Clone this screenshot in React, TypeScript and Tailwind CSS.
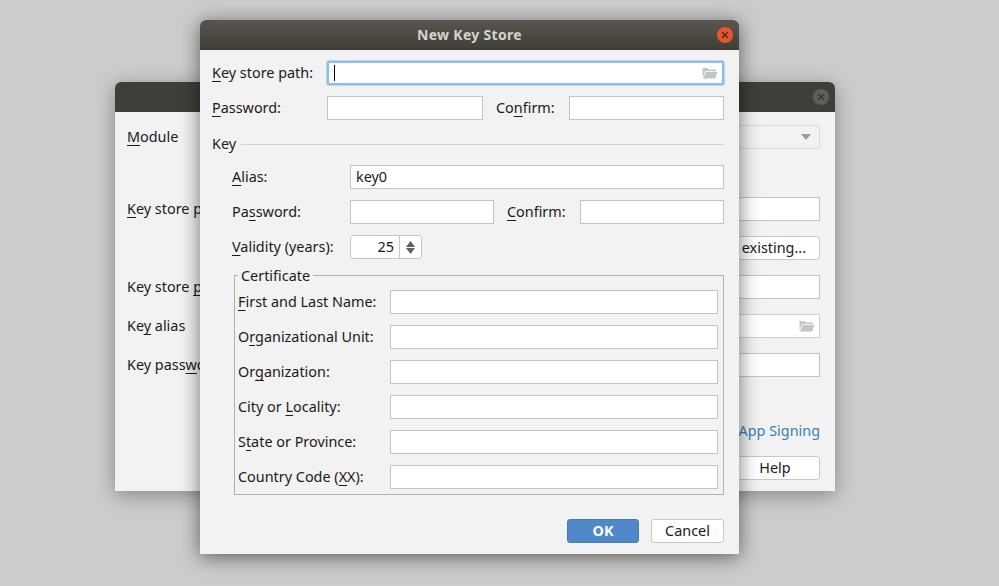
import React from "react";

const font = "font-['Noto_Sans','Liberation_Sans',sans-serif]";

function M({ b = "", m, a = "" }: { b?: string; m: string; a?: string }) {
  return (
    <span className="whitespace-nowrap">
      {b}
      <span className="underline decoration-1 underline-offset-[3px]">{m}</span>
      {a}
    </span>
  );
}

function Field({ className = "", children }: { className?: string; children?: React.ReactNode }) {
  return (
    <div className={`h-6 bg-white border border-[#c4c4c4] flex items-center justify-end ${className}`}>{children}</div>
  );
}

function Folder({ className = "" }: { className?: string }) {
  return (
    <svg width="16" height="12" viewBox="0 0 16 12" className={className}>
      <path d="M0.5 1 H5.5 L7 2.5 H14 V4 H3.5 L0.5 10 Z" fill="#c2c6c8" />
      <path d="M4 4.8 H15.5 L13.2 11.5 H0.8 Z" fill="#c2c6c8" />
    </svg>
  );
}

function Close({ active }: { active?: boolean }) {
  return (
    <div
      className={`w-4 h-4 rounded-full flex items-center justify-center ${
        active ? "bg-[#e5562a]" : "bg-[#5f5e59]"
      }`}
    >
      <svg width="8" height="8" viewBox="0 0 8 8">
        <path d="M1 1 L7 7 M7 1 L1 7" stroke={active ? "#47220f" : "#343330"} strokeWidth="1.2" />
      </svg>
    </div>
  );
}

function Btn({ children, className = "" }: { children: React.ReactNode; className?: string }) {
  return (
    <div className={`h-6 bg-white border border-[#c8c8c8] rounded-[3px] flex items-center justify-center ${className}`}>
      {children}
    </div>
  );
}

function BackWindow() {
  return (
    <div className="absolute left-[115px] top-[82px] w-[720px] h-[409px] bg-[#f2f2f2] rounded-t-[6px] shadow-[0_4px_20px_rgba(0,0,0,0.35)] flex flex-col">
      <div className="h-[30px] shrink-0 rounded-t-[6px] bg-[#403e39] flex items-center justify-end pr-[6px]">
        <Close />
      </div>
      <div className="flex flex-col px-[12px] pr-[15px] pt-[13px]">
        <div className="h-6 flex items-center justify-between">
          <M m="M" a="odule" />
          <div className="w-[200px] h-6 border border-[#d8d8d8] rounded-[3px] flex items-center justify-end pr-[8px]">
            <svg width="10" height="6" viewBox="0 0 10 6">
              <path d="M0 0 H10 L5 6 Z" fill="#9b9b9b" />
            </svg>
          </div>
        </div>
        <div className="h-6 mt-[48px] flex items-center justify-between">
          <M m="K" a="ey store path:" />
          <Field className="w-[500px]" />
        </div>
        <div className="h-6 mt-[15px] flex justify-end">
          <Btn className="w-[200px] justify-end pr-[13px]">Choose existing...</Btn>
        </div>
        <div className="h-6 mt-[15px] flex items-center justify-between">
          <M b="Key store " m="p" a="assword" />
          <Field className="w-[500px]" />
        </div>
        <div className="h-6 mt-[15px] flex items-center justify-between">
          <M b="Ke" m="y" a=" alias" />
          <Field className="w-[500px] bg-[#f2f2f2] border-[#d0d0d0] pr-[4px]">
            <Folder />
          </Field>
        </div>
        <div className="h-6 mt-[15px] flex items-center justify-between">
          <M b="Key pass" m="w" a="ord" />
          <Field className="w-[500px]" />
        </div>
        <div className="h-6 mt-[42px] flex items-center justify-end text-[#3b7fb8]">
          <span>Google Play App Signing</span>
        </div>
        <div className="h-6 mt-[13px] flex justify-end">
          <Btn className="w-[90px]">Help</Btn>
        </div>
      </div>
    </div>
  );
}

function CertRow({ label, top }: { label: React.ReactNode; top?: boolean }) {
  return (
    <div className={`flex items-center justify-between h-6 ${top ? "" : "mt-[11px]"}`}>
      {label}
      <Field className="w-[328px]" />
    </div>
  );
}

function FrontWindow() {
  return (
    <div className="absolute left-[200px] top-[20px] w-[539px] h-[534px] bg-[#f2f2f2] rounded-t-[6px] shadow-[0_3px_20px_rgba(0,0,0,0.55)] flex flex-col">
      <div className="relative h-[30px] shrink-0 rounded-t-[6px] bg-gradient-to-b from-[#5a564e] to-[#403e39] flex items-center justify-center">
        <span className="font-bold text-[#d6d3cc] text-[14px] tracking-[0.3px]">New Key Store</span>
        <div className="absolute right-[6px] top-[7px]">
          <Close active />
        </div>
      </div>
      <div className="flex flex-col pl-[12px] pr-[15px] pt-[11px]">
        <div className="flex items-center justify-between h-6">
          <M m="K" a="ey store path:" />
          <div className="w-[397px] h-6 bg-white border-[2px] border-[#8fbbea] shadow-[0_0_0_1px_#b9d4f0] rounded-[2px] flex items-center justify-between pl-[5px] pr-[4px]">
            <div className="w-px h-[16px] bg-black" />
            <Folder />
          </div>
        </div>
        <div className="flex items-center h-6 mt-[11px]">
          <div className="w-[115px]">
            <M m="P" a="assword:" />
          </div>
          <Field className="w-[156px]" />
          <div className="ml-[13px] w-[73px]">
            <M b="Co" m="n" a="firm:" />
          </div>
          <Field className="w-[155px]" />
        </div>
        <div className="flex items-center h-5 mt-[14px]">
          <span>Key</span>
          <div className="flex-1 h-px bg-[#cfcfcf] ml-[5px]" />
        </div>
        <div className="flex flex-col pl-[20px] mt-[11px]">
          <div className="flex items-center h-6">
            <div className="w-[118px]">
              <M m="A" a="lias:" />
            </div>
            <Field className="flex-1 justify-start pl-[5px]">key0</Field>
          </div>
          <div className="flex items-center h-6 mt-[11px]">
            <div className="w-[118px]">
              <M b="Pa" m="s" a="sword:" />
            </div>
            <Field className="w-[144px]" />
            <div className="ml-[13px] w-[73px]">
              <M m="C" a="onfirm:" />
            </div>
            <Field className="w-[144px]" />
          </div>
          <div className="flex items-center h-6 mt-[11px]">
            <div className="w-[118px]">
              <M m="V" a="alidity (years):" />
            </div>
            <div className="w-[72px] h-6 bg-white border border-[#c8c8c8] rounded-[3px] flex">
              <div className="flex-1 flex items-center justify-end pr-[5px]">25</div>
              <div className="w-[22px] border-l border-[#c8c8c8] flex flex-col items-center justify-center gap-px">
                <svg width="9" height="6" viewBox="0 0 9 6">
                  <path d="M4.5 0 L9 6 H0 Z" fill="#606060" />
                </svg>
                <svg width="9" height="6" viewBox="0 0 9 6">
                  <path d="M0 0 H9 L4.5 6 Z" fill="#606060" />
                </svg>
              </div>
            </div>
          </div>
          <div className="relative mt-[16px] ml-[2px] h-[220px] border border-[#b0b0b0] px-[3px] pt-[14px] pr-[5px]">
            <div className="absolute left-[3px] top-[-10px] h-5 px-[3px] bg-[#f2f2f2] flex items-center">Certificate</div>
            <CertRow top label={<M m="F" a="irst and Last Name:" />} />
            <CertRow label={<M b="O" m="r" a="ganizational Unit:" />} />
            <CertRow label={<M b="Or" m="g" a="anization:" />} />
            <CertRow label={<M b="City or " m="L" a="ocality:" />} />
            <CertRow label={<M b="S" m="t" a="ate or Province:" />} />
            <CertRow label={<M b="Country Code (" m="X" a="X):" />} />
          </div>
        </div>
        <div className="flex justify-end gap-[12px] mt-[24px]">
          <div className="w-[72px] h-6 rounded-[3px] bg-[#4f88c9] border border-[#4679b4] text-white font-bold flex items-center justify-center">
            OK
          </div>
          <Btn className="w-[73px]">Cancel</Btn>
        </div>
      </div>
    </div>
  );
}

export default function App() {
  return (
    <div className={`relative w-[999px] h-[586px] overflow-hidden bg-[#cccccc] text-[#1a1a1a] text-[14.4px] leading-[18px] ${font}`}>
      <BackWindow />
      <FrontWindow />
    </div>
  );
}
